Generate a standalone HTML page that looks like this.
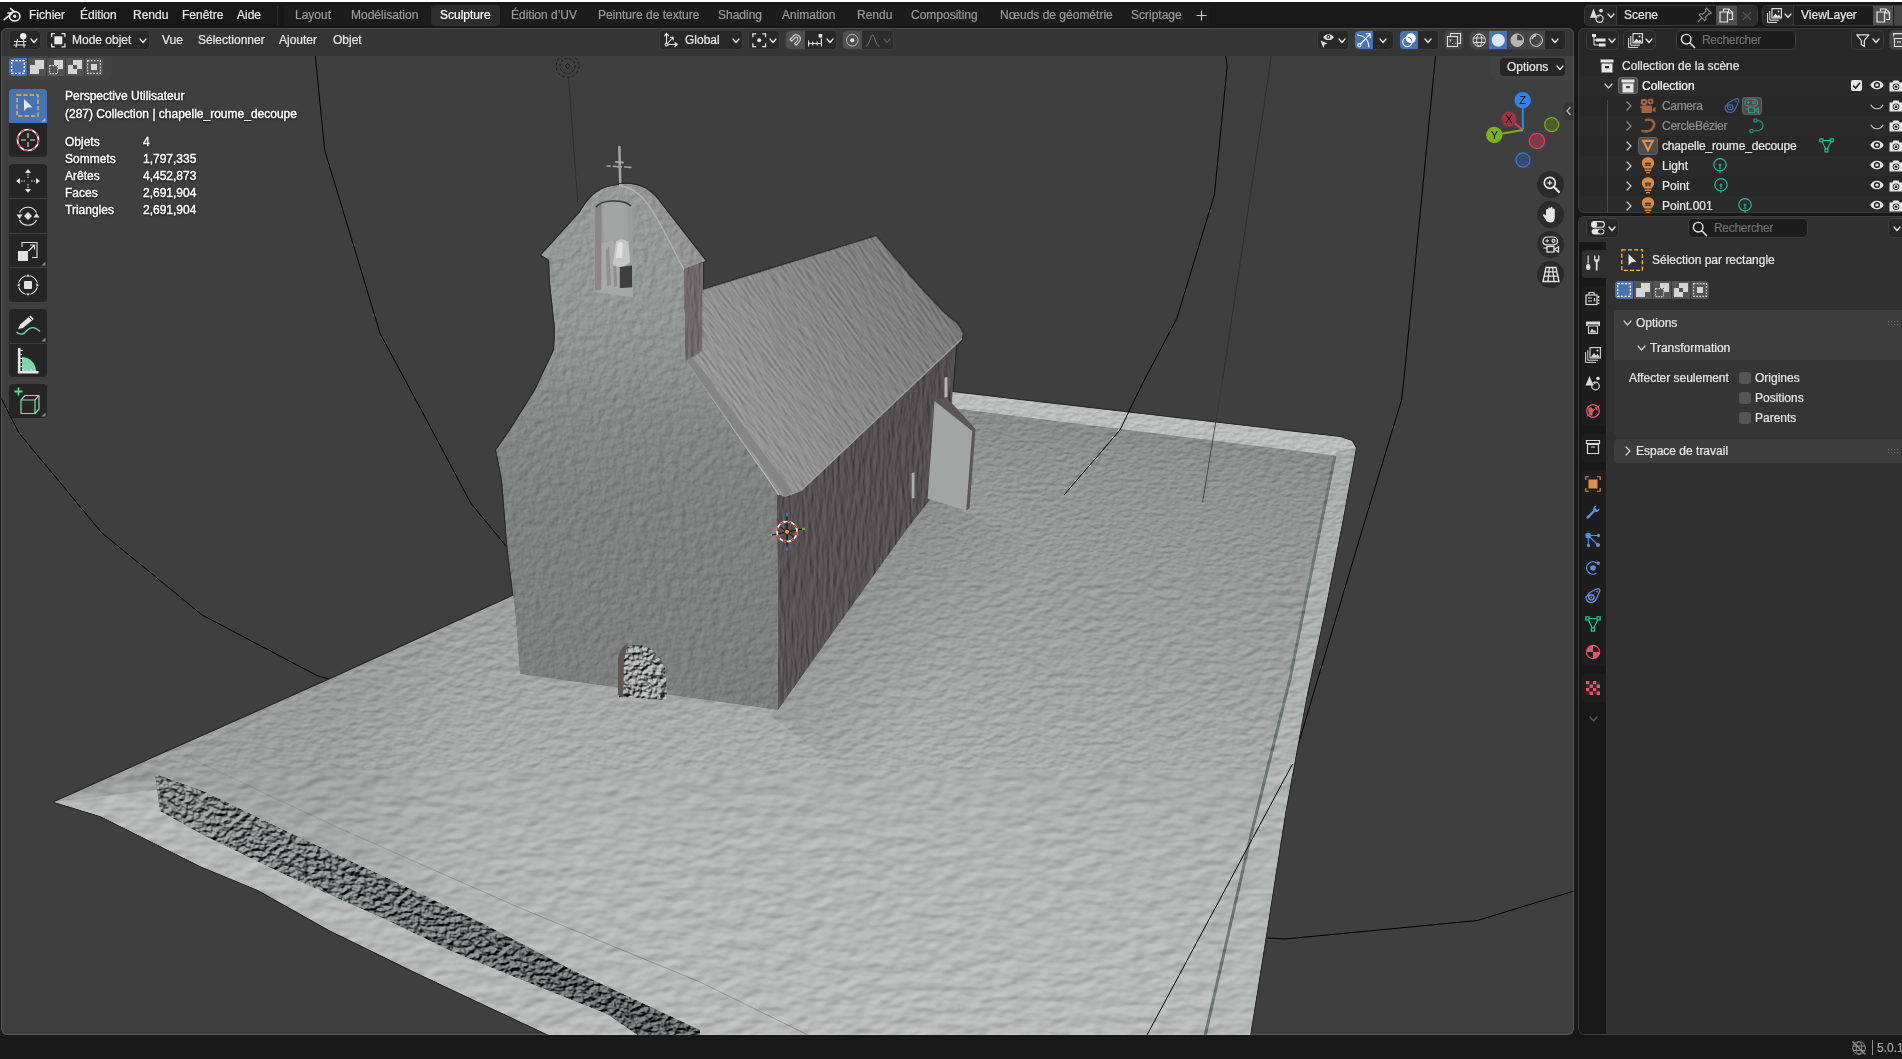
<!DOCTYPE html>
<html lang="fr">
<head>
<meta charset="utf-8">
<title>Blender</title>
<style>
html,body{margin:0;padding:0;background:#181818;}
body{width:1902px;height:1059px;position:relative;overflow:hidden;font-family:"Liberation Sans",sans-serif;font-size:12px;color:#e6e6e6;line-height:14px;}
.a{position:absolute;}
.t{position:absolute;white-space:nowrap;height:14px;line-height:14px;will-change:transform;-webkit-font-smoothing:antialiased;-webkit-text-stroke:0.22px currentColor;}
.dim{color:#989898;}
.sh{text-shadow:0 1px 2px rgba(0,0,0,.9),0 0 2px rgba(0,0,0,.7);color:#fff;-webkit-text-stroke:0.4px #fff;}
svg{position:absolute;overflow:visible;}
#vp{left:1px;top:28px;width:1573px;height:1007px;border-radius:6px;background:#3f3f3f;overflow:hidden;}
.btn{position:absolute;border-radius:4px;box-shadow:0 0 0 1px #3a3a3a;}
.hb{position:absolute;top:31px;height:18px;background:#282828;border-radius:4px;box-shadow:0 0 0 1px #3c3c3c;}
</style>
</head>

<body>
<div class="a" style="left:0;top:0;width:1902px;height:2px;background:#fff"></div>
<div id="topbar" class="a" style="left:0;top:0;width:1902px;height:28px;">
<!-- blender logo -->
<svg style="left:3px;top:7px" width="19" height="16" viewBox="0 0 19 16"><g fill="none" stroke="#e6e6e6" stroke-width="1.7" stroke-linecap="round" stroke-linejoin="round"><path d="M1.2,12.6 L9.2,6.2 M5,6 L9.5,6 M7.6,1.6 L11.2,4.6"/><ellipse cx="11.7" cy="9.3" rx="5.2" ry="4.7"/></g><circle cx="11.7" cy="9.3" r="1.7" fill="#e6e6e6"/></svg>
<span class="t" style="left:29px;top:8px">Fichier</span>
<span class="t" style="left:80px;top:8px">Édition</span>
<span class="t" style="left:133px;top:8px">Rendu</span>
<span class="t" style="left:182px;top:8px">Fenêtre</span>
<span class="t" style="left:237px;top:8px">Aide</span>
<div class="a" style="left:277px;top:6px;width:1px;height:19px;background:#2e2e2e"></div>
<div class="a" style="left:284px;top:5px;width:926px;height:21px;background:#1c1c1c;border-radius:4px"></div>
<div class="a" style="left:431px;top:5px;width:69px;height:21px;background:#2d2d2d;border-radius:4px"></div>
<span class="t dim" style="left:295px;top:8px">Layout</span>
<span class="t dim" style="left:351px;top:8px">Modélisation</span>
<span class="t" style="left:440px;top:8px;color:#fff">Sculpture</span>
<span class="t dim" style="left:511px;top:8px">Édition d’UV</span>
<span class="t dim" style="left:598px;top:8px">Peinture de texture</span>
<span class="t dim" style="left:718px;top:8px">Shading</span>
<span class="t dim" style="left:782px;top:8px">Animation</span>
<span class="t dim" style="left:857px;top:8px">Rendu</span>
<span class="t dim" style="left:911px;top:8px">Compositing</span>
<span class="t dim" style="left:1000px;top:8px">Nœuds de géométrie</span>
<span class="t dim" style="left:1131px;top:8px">Scriptage</span>
<svg style="left:1196px;top:10px" width="11" height="11"><path d="M5.5,0.5V10.5M0.5,5.5H10.5" stroke="#c8c8c8" stroke-width="1.2" fill="none"/></svg>
<!-- scene selector -->
<div class="btn" style="left:1585px;top:6px;width:172px;height:19px;background:#1d1d1d"></div>
<div class="a" style="left:1585px;top:6px;width:31px;height:19px;background:#282828;border-radius:4px 0 0 4px"></div>
<div class="a" style="left:1616px;top:6px;width:1px;height:19px;background:#3a3a3a"></div>
<div class="a" style="left:1716px;top:6px;width:21px;height:19px;background:#505050"></div>
<div class="a" style="left:1737px;top:6px;width:20px;height:19px;background:#2e2e2e;border-radius:0 4px 4px 0"></div>
<svg style="left:1589px;top:8px" width="16" height="16"><path d="M4.5,0.5L8,9.8H1Z" fill="#dcdcdc"/><circle cx="12" cy="2.6" r="1.9" fill="#dcdcdc"/><circle cx="10.5" cy="10.8" r="3.6" fill="none" stroke="#dcdcdc" stroke-width="1.2"/><path d="M8.6,9.6A2.3,2.3 0 0 1 10.4,8.4" stroke="#dcdcdc" fill="none"/></svg>
<svg style="left:1607px;top:13px" width="8" height="6"><path d="M1,1L4,4.2L7,1" fill="none" stroke="#e6e6e6" stroke-width="1.3" stroke-linecap="round"/></svg>
<span class="t" style="left:1624px;top:8px">Scene</span>
<svg style="left:1697px;top:7px" width="16" height="17"><path d="M9.5,1.2L14.2,6L12.8,7.2L11.8,6.6L8.6,10L9,12.6L7.8,13.6L2.2,7.8L3.2,6.8L5.8,7.2L9.2,4L8.4,2.6Z" fill="none" stroke="#8c8c8c" stroke-width="1.1" stroke-linejoin="round"/><path d="M4.8,11L0.8,15.2" stroke="#8c8c8c" stroke-width="1.1"/></svg>
<svg style="left:1719px;top:8px" width="15" height="15"><path d="M4.5,3.5V1H10L13.5,4.5V11.5H10" fill="none" stroke="#e6e6e6" stroke-width="1.2"/><path d="M1,4H8.5V14H1Z" fill="none" stroke="#e6e6e6" stroke-width="1.2"/><path d="M9.5,1V5H13.5" fill="none" stroke="#e6e6e6" stroke-width="1"/></svg>
<svg style="left:1742px;top:11px" width="10" height="10"><path d="M1,1L9,9M9,1L1,9" stroke="#555" stroke-width="1.3"/></svg>
<!-- viewlayer selector -->
<div class="btn" style="left:1763px;top:6px;width:150px;height:19px;background:#1d1d1d"></div>
<div class="a" style="left:1763px;top:6px;width:30px;height:19px;background:#282828;border-radius:4px 0 0 4px"></div>
<div class="a" style="left:1793px;top:6px;width:1px;height:19px;background:#3a3a3a"></div>
<div class="a" style="left:1873px;top:6px;width:20px;height:19px;background:#505050"></div>
<div class="a" style="left:1894px;top:6px;width:20px;height:19px;background:#444"></div>
<svg style="left:1767px;top:8px" width="15" height="15"><path d="M0.6,5V14.4H10M2.8,3V12.2H12" fill="none" stroke="#e6e6e6" stroke-width="1"/><rect x="5" y="0.6" width="9.4" height="9.4" fill="none" stroke="#e6e6e6" stroke-width="1.1"/><path d="M5.5,9.5L8.5,5.5L10.5,8L12,6.5L14,9.5Z" fill="#e6e6e6"/><circle cx="11.5" cy="3.5" r="1" fill="#e6e6e6"/></svg>
<svg style="left:1784px;top:13px" width="8" height="6"><path d="M1,1L4,4.2L7,1" fill="none" stroke="#e6e6e6" stroke-width="1.3" stroke-linecap="round"/></svg>
<span class="t" style="left:1801px;top:8px">ViewLayer</span>
<svg style="left:1876px;top:8px" width="15" height="15"><path d="M4.5,3.5V1H10L13.5,4.5V11.5H10" fill="none" stroke="#e6e6e6" stroke-width="1.2"/><path d="M1,4H8.5V14H1Z" fill="none" stroke="#e6e6e6" stroke-width="1.2"/><path d="M9.5,1V5H13.5" fill="none" stroke="#e6e6e6" stroke-width="1"/></svg>
</div>

<div id="vp" class="a">
<svg id="model" width="1902" height="1059" style="left:-1px;top:-28px">
<defs>
<linearGradient id="gG" gradientUnits="userSpaceOnUse" x1="0" y1="400" x2="0" y2="1036">
<stop offset="0.000" stop-color="#8a8c8b"/><stop offset="0.127" stop-color="#979998"/><stop offset="0.395" stop-color="#a3a5a4"/><stop offset="0.568" stop-color="#abadac"/><stop offset="0.678" stop-color="#b2b4b3"/><stop offset="0.866" stop-color="#b6b8b7"/><stop offset="1.000" stop-color="#b8bab9"/>
</linearGradient>
<linearGradient id="gF" gradientUnits="userSpaceOnUse" x1="0" y1="185" x2="0" y2="710">
<stop offset="0.000" stop-color="#989a99"/><stop offset="0.257" stop-color="#949695"/><stop offset="0.448" stop-color="#868887"/><stop offset="0.619" stop-color="#7f8180"/><stop offset="1.000" stop-color="#7d7f7e"/>
</linearGradient>
<linearGradient id="gR" gradientUnits="userSpaceOnUse" x1="940" y1="290" x2="677" y2="435">
<stop offset="0" stop-color="#7b7a7b"/><stop offset="1" stop-color="#9d9c9d"/>
</linearGradient>
<linearGradient id="gS" gradientUnits="userSpaceOnUse" x1="780" y1="600" x2="950" y2="400">
<stop offset="0" stop-color="#575254"/><stop offset="1" stop-color="#524d4f"/>
</linearGradient>
<filter id="fG1" x="0" y="380" width="1400" height="190" filterUnits="userSpaceOnUse" color-interpolation-filters="sRGB">
<feTurbulence type="fractalNoise" baseFrequency="0.13 0.26" numOctaves="2" seed="4" result="n"/>
<feDiffuseLighting in="n" surfaceScale="1.3" diffuseConstant="1" lighting-color="#fff" result="l"><feDistantLight azimuth="235" elevation="50"/></feDiffuseLighting>
<feComposite in="SourceGraphic" in2="l" operator="arithmetic" k1="0" k2="1" k3="0.26" k4="-0.1992" result="m"/>
<feComposite in="m" in2="SourceGraphic" operator="in"/>
</filter>
<filter id="fG2" x="0" y="570" width="1400" height="200" filterUnits="userSpaceOnUse" color-interpolation-filters="sRGB">
<feTurbulence type="fractalNoise" baseFrequency="0.085 0.16" numOctaves="2" seed="5" result="n"/>
<feDiffuseLighting in="n" surfaceScale="1.6" diffuseConstant="1" lighting-color="#fff" result="l"><feDistantLight azimuth="235" elevation="50"/></feDiffuseLighting>
<feComposite in="SourceGraphic" in2="l" operator="arithmetic" k1="0" k2="1" k3="0.28" k4="-0.2145" result="m"/>
<feComposite in="m" in2="SourceGraphic" operator="in"/>
</filter>
<filter id="fG3" x="0" y="770" width="1400" height="280" filterUnits="userSpaceOnUse" color-interpolation-filters="sRGB">
<feTurbulence type="fractalNoise" baseFrequency="0.05 0.095" numOctaves="2" seed="6" result="n"/>
<feDiffuseLighting in="n" surfaceScale="2.2" diffuseConstant="1" lighting-color="#fff" result="l"><feDistantLight azimuth="235" elevation="50"/></feDiffuseLighting>
<feComposite in="SourceGraphic" in2="l" operator="arithmetic" k1="0" k2="1" k3="0.3" k4="-0.2298" result="m"/>
<feComposite in="m" in2="SourceGraphic" operator="in"/>
</filter>
<filter id="fF" x="480" y="170" width="310" height="560" filterUnits="userSpaceOnUse" color-interpolation-filters="sRGB">
<feTurbulence type="fractalNoise" baseFrequency="0.13" numOctaves="3" seed="9" result="n"/>
<feDiffuseLighting in="n" surfaceScale="1.4" diffuseConstant="1" lighting-color="#fff" result="l"><feDistantLight azimuth="225" elevation="50"/></feDiffuseLighting>
<feComposite in="SourceGraphic" in2="l" operator="arithmetic" k1="0" k2="1" k3="0.26" k4="-0.1992" result="m"/>
<feComposite in="m" in2="SourceGraphic" operator="in"/>
</filter>
<filter id="fS" x="670" y="250" width="320" height="470" filterUnits="userSpaceOnUse" color-interpolation-filters="sRGB">
<feTurbulence type="fractalNoise" baseFrequency="0.28 0.045" numOctaves="3" seed="5" result="n"/>
<feDiffuseLighting in="n" surfaceScale="1.3" diffuseConstant="1" lighting-color="#fff" result="l"><feDistantLight azimuth="200" elevation="50"/></feDiffuseLighting>
<feComposite in="SourceGraphic" in2="l" operator="arithmetic" k1="0" k2="1" k3="0.24" k4="-0.1838" result="m"/>
<feComposite in="m" in2="SourceGraphic" operator="in"/>
</filter>
<filter id="fR" x="-400" y="-400" width="800" height="800" filterUnits="userSpaceOnUse" color-interpolation-filters="sRGB">
<feTurbulence type="fractalNoise" baseFrequency="0.05 0.42" numOctaves="3" seed="7" result="n"/>
<feDiffuseLighting in="n" surfaceScale="1.2" diffuseConstant="1" lighting-color="#fff" result="l"><feDistantLight azimuth="270" elevation="50"/></feDiffuseLighting>
<feComposite in="SourceGraphic" in2="l" operator="arithmetic" k1="0" k2="1" k3="0.24" k4="-0.1838" result="m"/>
<feComposite in="m" in2="SourceGraphic" operator="in"/>
</filter>
<filter id="fW" x="140" y="760" width="580" height="290" filterUnits="userSpaceOnUse" color-interpolation-filters="sRGB">
<feTurbulence type="fractalNoise" baseFrequency="0.16 0.2" numOctaves="2" seed="11" result="n"/>
<feDiffuseLighting in="n" surfaceScale="4" diffuseConstant="1" lighting-color="#fff" result="l"><feDistantLight azimuth="240" elevation="50"/></feDiffuseLighting>
<feComposite in="SourceGraphic" in2="l" operator="arithmetic" k1="0" k2="1" k3="0.7" k4="-0.536" result="m"/>
<feComposite in="m" in2="SourceGraphic" operator="in"/>
</filter>
<linearGradient id="gW" gradientUnits="userSpaceOnUse" x1="160" y1="790" x2="640" y2="1020">
<stop offset="0" stop-color="#868b8a"/><stop offset="0.5" stop-color="#747a79"/><stop offset="1" stop-color="#5f6665"/>
</linearGradient>
<linearGradient id="gRW" gradientUnits="userSpaceOnUse" x1="1340" y1="450" x2="1230" y2="1036"><stop offset="0" stop-color="#a9abaa"/><stop offset="0.4" stop-color="#afb1b0"/><stop offset="1" stop-color="#b7b9b8"/></linearGradient>
<linearGradient id="gX" gradientUnits="userSpaceOnUse" x1="54" y1="0" x2="1356" y2="0"><stop offset="0" stop-color="#000" stop-opacity="0.08"/><stop offset="0.21" stop-color="#000" stop-opacity="0.075"/><stop offset="0.31" stop-color="#000" stop-opacity="0.015"/><stop offset="0.42" stop-color="#000" stop-opacity="0"/><stop offset="1" stop-color="#000" stop-opacity="0"/></linearGradient>
<radialGradient id="gY" gradientUnits="userSpaceOnUse" cx="1350" cy="440" r="540"><stop offset="0" stop-color="#000" stop-opacity="0.065"/><stop offset="0.45" stop-color="#000" stop-opacity="0.033"/><stop offset="1" stop-color="#000" stop-opacity="0"/></radialGradient>
<filter id="fD" x="610" y="630" width="70" height="80" filterUnits="userSpaceOnUse" color-interpolation-filters="sRGB">
<feTurbulence type="fractalNoise" baseFrequency="0.22" numOctaves="2" seed="3" result="n"/>
<feDiffuseLighting in="n" surfaceScale="4" diffuseConstant="1" lighting-color="#fff" result="l"><feDistantLight azimuth="235" elevation="50"/></feDiffuseLighting>
<feComposite in="SourceGraphic" in2="l" operator="arithmetic" k1="0" k2="1" k3="0.75" k4="-0.5745" result="m"/>
<feComposite in="m" in2="SourceGraphic" operator="in"/>
</filter>
<linearGradient id="gAO" gradientUnits="userSpaceOnUse" x1="854" y1="605" x2="951" y2="675"><stop offset="0" stop-color="#000" stop-opacity="0.075"/><stop offset="1" stop-color="#000" stop-opacity="0"/></linearGradient>
</defs>

<g fill="none" stroke="#000" stroke-width="1" id="curves">
<path d="M315.3,56 L324.7,150.2 L380.2,333.6 L422.3,412 L470.7,503 L508,548.5"/>
<path d="M0,396 L19,433 L101.6,532.6 L201.8,614.8 L316.6,675.4 L333,680.4"/>
<path d="M1435.5,56 L1404,379 L1401.5,400 L1362.5,529 L1292.5,764 L1146.5,1036"/>
<path d="M1267.5,938 L1285,939 L1477.5,920.5 L1574,891"/>
<path d="M1225.7,56 L1227.2,66.7 L1214.4,194.8 L1176.9,318.3 L1144.9,379 L1132,405" />
<path d="M1271.4,56 L1222.6,379" stroke="#2a2a2a" stroke-width="0.8"/>
<path d="M568.6,78 L578,206" stroke="#2a2a2a" stroke-width="0.8"/>
</g>
<g fill="none" stroke="#1c1c1c" stroke-width="1" id="lighticon">
<circle cx="567.6" cy="66" r="11.5" stroke-dasharray="3 2.2"/><circle cx="567.6" cy="66" r="7.5" stroke-dasharray="2.6 2"/><path d="M567.6,63.5L570.1,66L567.6,68.5L565.1,66Z"/>
</g>
<g id="outline" fill="none" stroke="#2b2b2b" stroke-width="2.2" stroke-linejoin="round"><path d="M54,802 L150,759 L330,679 L512,596 L600,560 L952,392 L1340,437 L1352,441 L1356,448 L1341,529 L1325,610 L1307,694 L1285,814 L1267,929 L1250,1036 L551,1036 L470,998 L417,973 L329,930 L258,890 L200,866 L100,816 Z"/><path d="M619,185 C600,186 590,195 580,212 L541,255 L549,260 L550,283 L555,330 L554,350 L535,390 L510,430 L496,450 L502,480 L507,545 L515,610 L520,674 L778,710 L777,493 L686,361 L684,269 C660,225 648,188 619,185 Z"/><path d="M619,184 C640,182 652,190 660,202 L706,261 L684,269 C660,235 650,190 619,188 Z"/><path d="M702,290 L876,236 L900,264 L916,283 L944,313 L957,323 L963,333 L962,339 L801,491 L785,497 L777,493 L686,361 L702,350 Z"/><path d="M777,493 L785,497 L801,491 L962,339 L956,348 L952,403 L935,400 L930,500 L907,529 L824,645 L778,710 Z"/><path d="M683,268 L703,262 L703,350 L686,362 Z"/><path d="M934.6,401 L972.3,431 L975.5,429 L969.5,508.5 L966.3,510.5 L927.6,498.6 Z"/></g>
<g filter="url(#fG1)">
<!-- ground -->
<path id="ground" fill="url(#gG)" d="M54,802 L150,759 L330,679 L512,596 L600,560 L952,392 L1340,437 L1352,441 L1356,448 L1341,529 L1325,610 L1307,694 L1285,814 L1267,929 L1250,1036 L551,1036 L470,998 L417,973 L329,930 L258,890 L200,866 L100,816 Z"/>
<path fill="url(#gX)" d="M54,802 L150,759 L330,679 L512,596 L600,560 L952,392 L1340,437 L1352,441 L1356,448 L1341,529 L1325,610 L1307,694 L1285,814 L1267,929 L1250,1036 L551,1036 L470,998 L417,973 L329,930 L258,890 L200,866 L100,816 Z"/>
<path fill="url(#gY)" d="M54,802 L150,759 L330,679 L512,596 L600,560 L952,392 L1340,437 L1352,441 L1356,448 L1341,529 L1325,610 L1307,694 L1285,814 L1267,929 L1250,1036 L551,1036 L470,998 L417,973 L329,930 L258,890 L200,866 L100,816 Z"/>
<!-- back wall -->
<path fill="#bbbdbc" d="M952,392 L1340,437 L1352,441 L1356,448 L1338,456 L1330,455 L952,408 Z"/>
<!-- right wall -->
<path fill="url(#gRW)" d="M1356,448 L1341,529 L1325,610 L1307,694 L1285,814 L1267,929 L1250,1036 L1205,1036 L1250,839 L1290,679 L1320,529 L1336,452 Z"/>
<path fill="none" stroke="#6f7574" stroke-width="3" d="M1335,456 L1320,529 L1290,679 L1250,839 L1205,1036"/>
<!-- front skirt + stone wall -->
<path fill="#b6b8b7" d="M54,802 L155,790 L640,1036 L551,1036 L470,998 L417,973 L329,930 L258,890 L200,866 L100,816 Z"/>
<path d="M192,759 L332,825 L520,908 L700,982 L810,1036" fill="none" stroke="#8f9392" stroke-width="1"/>
</g>
<g filter="url(#fG2)">
<!-- ground -->
<path fill="url(#gG)" d="M54,802 L150,759 L330,679 L512,596 L600,560 L952,392 L1340,437 L1352,441 L1356,448 L1341,529 L1325,610 L1307,694 L1285,814 L1267,929 L1250,1036 L551,1036 L470,998 L417,973 L329,930 L258,890 L200,866 L100,816 Z"/>
<path fill="url(#gX)" d="M54,802 L150,759 L330,679 L512,596 L600,560 L952,392 L1340,437 L1352,441 L1356,448 L1341,529 L1325,610 L1307,694 L1285,814 L1267,929 L1250,1036 L551,1036 L470,998 L417,973 L329,930 L258,890 L200,866 L100,816 Z"/>
<path fill="url(#gY)" d="M54,802 L150,759 L330,679 L512,596 L600,560 L952,392 L1340,437 L1352,441 L1356,448 L1341,529 L1325,610 L1307,694 L1285,814 L1267,929 L1250,1036 L551,1036 L470,998 L417,973 L329,930 L258,890 L200,866 L100,816 Z"/>
<!-- back wall -->
<path fill="#bbbdbc" d="M952,392 L1340,437 L1352,441 L1356,448 L1338,456 L1330,455 L952,408 Z"/>
<!-- right wall -->
<path fill="url(#gRW)" d="M1356,448 L1341,529 L1325,610 L1307,694 L1285,814 L1267,929 L1250,1036 L1205,1036 L1250,839 L1290,679 L1320,529 L1336,452 Z"/>
<path fill="none" stroke="#6f7574" stroke-width="3" d="M1335,456 L1320,529 L1290,679 L1250,839 L1205,1036"/>
<!-- front skirt + stone wall -->
<path fill="#b6b8b7" d="M54,802 L155,790 L640,1036 L551,1036 L470,998 L417,973 L329,930 L258,890 L200,866 L100,816 Z"/>
<path d="M192,759 L332,825 L520,908 L700,982 L810,1036" fill="none" stroke="#8f9392" stroke-width="1"/>
</g>
<g filter="url(#fG3)">
<!-- ground -->
<path fill="url(#gG)" d="M54,802 L150,759 L330,679 L512,596 L600,560 L952,392 L1340,437 L1352,441 L1356,448 L1341,529 L1325,610 L1307,694 L1285,814 L1267,929 L1250,1036 L551,1036 L470,998 L417,973 L329,930 L258,890 L200,866 L100,816 Z"/>
<path fill="url(#gX)" d="M54,802 L150,759 L330,679 L512,596 L600,560 L952,392 L1340,437 L1352,441 L1356,448 L1341,529 L1325,610 L1307,694 L1285,814 L1267,929 L1250,1036 L551,1036 L470,998 L417,973 L329,930 L258,890 L200,866 L100,816 Z"/>
<path fill="url(#gY)" d="M54,802 L150,759 L330,679 L512,596 L600,560 L952,392 L1340,437 L1352,441 L1356,448 L1341,529 L1325,610 L1307,694 L1285,814 L1267,929 L1250,1036 L551,1036 L470,998 L417,973 L329,930 L258,890 L200,866 L100,816 Z"/>
<!-- back wall -->
<path fill="#bbbdbc" d="M952,392 L1340,437 L1352,441 L1356,448 L1338,456 L1330,455 L952,408 Z"/>
<!-- right wall -->
<path fill="url(#gRW)" d="M1356,448 L1341,529 L1325,610 L1307,694 L1285,814 L1267,929 L1250,1036 L1205,1036 L1250,839 L1290,679 L1320,529 L1336,452 Z"/>
<path fill="none" stroke="#6f7574" stroke-width="3" d="M1335,456 L1320,529 L1290,679 L1250,839 L1205,1036"/>
<!-- front skirt + stone wall -->
<path fill="#b6b8b7" d="M54,802 L155,790 L640,1036 L551,1036 L470,998 L417,973 L329,930 L258,890 L200,866 L100,816 Z"/>
<path d="M192,759 L332,825 L520,908 L700,982 L810,1036" fill="none" stroke="#8f9392" stroke-width="1"/>
</g>
<g filter="url(#fW)"><path fill="url(#gW)" d="M155,774 L205,792 L290,833 L385,877 L480,922 L576,972 L700,1030 L700,1036 L639,1036 L607,1014 L512,976 L449,950 L385,919 L290,877 L205,836 L160,811 Z"/></g>
<path fill="url(#gAO)" d="M770,715 L930,495 L1060,560 L880,800 Z"/>
<g filter="url(#fS)">
<!-- side wall -->
<path fill="url(#gS)" d="M777,493 L785,497 L801,491 L962,339 L956,348 L952,403 L935,400 L930,500 L907,529 L824,645 L778,710 Z"/>
<!-- tower side -->
<path fill="#6d696b" d="M683,268 L703,262 L703,350 L686,362 Z"/>
</g>
<!-- buttress -->
<path fill="#a3a4a4" d="M934.6,401 L972.3,431 L966.3,510.5 L927.6,498.6 Z"/>
<path fill="#5a5557" d="M936.5,398 L949,400 L975.5,429 L972.3,431 L934.6,401 Z"/>
<path fill="#5a5557" d="M972.3,431 L975.5,429 L969.5,508.5 L966.3,510.5 Z"/>
<path fill="#b5b5b5" d="M944.5,377.5 L947.5,377 L947.5,397 L944.5,397.4 Z"/>
<path fill="#adadad" d="M911.7,473 L914.5,472.5 L914.5,498 L911.7,498.6 Z"/>
<!-- roof -->
<g transform="translate(820,360) rotate(54)" filter="url(#fR)">
<path transform="rotate(-54) translate(-820,-360)" fill="url(#gR)" d="M702,290 L876,236 L900,264 L916,283 L944,313 L957,323 L963,333 L962,339 L801,491 L785,497 L777,493 L686,361 L702,350 Z"/>
</g>
<path d="M686.4,362 L693,358 L792,491 L785,496.5 Z" fill="#858585"/>
<path d="M686,362 L779,495" stroke="#b4b5b5" stroke-width="1.6" fill="none"/>
<path d="M801,490.5 L962,338.5" stroke="#9e9e9e" stroke-width="1.4" fill="none"/>
<g filter="url(#fF)">
<!-- tower cap -->
<path fill="#949494" d="M619,184 C640,182 652,190 660,202 L706,261 L684,269 C660,235 650,190 619,188 Z"/>
<!-- facade -->
<path fill="url(#gF)" d="M619,185 C600,186 590,195 580,212 L541,255 L549,260 L550,283 L555,330 L554,350 L535,390 L510,430 L496,450 L502,480 L507,545 L515,610 L520,674 L778,710 L777,493 L686,361 L684,269 C660,225 648,188 619,185 Z"/>
</g>
<path d="M619,185.5 C648,188.5 660,225.5 684,269.5" fill="none" stroke="#b2b4b3" stroke-width="1.3"/>
<!-- bell opening -->
<path fill="#9b9d9c" d="M593.6,212 C595,199 630,198 633,212 L633.2,297.5 L594.5,292 Z"/>
<path fill="#3f3f3f" d="M619.6,267 L632,265.5 L632.2,287.4 L619.8,288 Z"/>
<!-- door -->
<path filter="url(#fD)" fill="#9c9e9d" d="M619,697 L618,660 C622,640 655,636 666,672 L667,700 Z"/>
<path fill="#5d5758" d="M618,695 L618,660 C619,650 624,645 628,643 L624,660 L623,697 Z"/>

<!-- lines in front of ground -->
<g fill="none" stroke="#000" stroke-width="1">
<path d="M1132,405 L1120,430 L1064,495"/>
<path d="M1292.5,764 L1146.5,1036"/>
<path d="M1227.5,350 L1202.5,502.5" stroke="#333" stroke-width="0.8"/>
</g>
<!-- cross -->
<g fill="none" stroke="#a3a3a3" stroke-linecap="round">
<path d="M619.4,147 L620.2,182" stroke-width="2.6"/><path d="M607,166 L633,167.5" stroke-width="1.6" stroke-dasharray="3 3.4 8 3.4 3 0"/><path d="M616,162 L623,162.5" stroke-width="2"/>
</g>
<!-- bell -->
<path fill="#8a8687" d="M594.7,210 C596,204 599,202.5 601.5,202.5 L601.5,289.7 L595,290 Z"/>
<path d="M596,207 C602,199.5 624,199 631,206" fill="none" stroke="#3a3a3a" stroke-width="1.6"/>
<path fill="#a2a4a3" d="M601.5,204 C610,201 622,201.5 627.6,206 L628,240 L604,241 Z"/>
<path fill="#a9a9a9" d="M601.5,243 L614,240.5 L617,258 L619.6,268 L619.6,289.7 L601.5,289.7 Z"/>
<path fill="#8f8f8f" d="M606,250 L609,246 L611,285 L607,286 Z M613,262 L616,262 L617,286 L614,287 Z"/>
<path fill="#c6c6c6" d="M616,241 C620,238.5 626,239 628.5,242 L630,262 C626,267 617,268 612.8,265 Z"/>
<path fill="#e0e0e0" d="M617.5,243 C619,241.5 622,241.5 623,243 L622,258 L616,258 Z"/>
<path fill="#a6a8a7" d="M594.5,292 L601.5,289.2 L633,287.4 L633.2,297.5 Z"/>
<!-- 3D cursor -->
<g fill="none">
<path d="M787,517 L787,546 M772,535 L802,529" stroke="#111" stroke-width="1.1"/>
<path d="M779,526 L795,538" stroke="#111" stroke-width="1"/>
<circle cx="787" cy="531.5" r="10" stroke="#fff" stroke-width="1.6"/>
<circle cx="787" cy="531.5" r="10" stroke="#ee2a2a" stroke-width="1.6" stroke-dasharray="3.93 3.93"/>
<circle cx="787" cy="531.7" r="2.6" fill="#f5a02a" stroke="#121a2a" stroke-width="1"/>
<path d="M787,513 V516 M787,548 V550.5" stroke="#3d78d8" stroke-width="2"/>
<path d="M769,535.4 L772,534.8 M802,529.2 L805,528.6" stroke="#6fb32a" stroke-width="2"/>
</g>
</svg>

</div>
<div class="a" style="left:1px;top:28px;width:1573px;height:28px;background:#353535;border-radius:6px 6px 0 0"></div>
<div class="a" style="left:1px;top:56px;width:111px;height:24px;background:#424242;border-radius:0 0 6px 0"></div>
<div class="a" style="left:1491px;top:56px;width:83px;height:24px;background:#424242;border-radius:0 0 0 6px"></div>
<div class="hb" style="left:10px;width:30px"></div>
<svg style="left:13px;top:32px" width="18" height="16"><g fill="none" stroke="#e6e6e6" stroke-width="1.1"><path d="M1,9.5H13.5M0.5,13H13M4.5,7 L3,15.5M10.5,7 L11,15.5"/></g><circle cx="10.2" cy="4.2" r="3.2" fill="#e6e6e6"/><circle cx="9.2" cy="3.2" r="1.1" fill="#fff"/></svg>
<svg style="left:30.0px;top:38.25px" width="8" height="5.5"><path d="M1,1 L4.0,4.5 L7,1" fill="none" stroke="#e6e6e6" stroke-width="1.3" stroke-linecap="round" stroke-linejoin="round"/></svg>
<div class="hb" style="left:47px;width:102px"></div>
<svg style="left:51px;top:33px" width="15" height="15"><g fill="none" stroke="#e6e6e6" stroke-width="1.2"><path d="M0.6,4V0.6H4M10.5,0.6H13.9V4M13.9,10.5V13.9H10.5M4,13.9H0.6V10.5"/></g><rect x="3.3" y="3.3" width="8" height="8" fill="#e6e6e6"/></svg>
<span class="t" style="left:72px;top:33px">Mode objet</span>
<svg style="left:139.0px;top:38.25px" width="8" height="5.5"><path d="M1,1 L4.0,4.5 L7,1" fill="none" stroke="#e6e6e6" stroke-width="1.3" stroke-linecap="round" stroke-linejoin="round"/></svg>
<span class="t" style="left:162px;top:33px">Vue</span>
<span class="t" style="left:198px;top:33px">Sélectionner</span>
<span class="t" style="left:279px;top:33px">Ajouter</span>
<span class="t" style="left:333px;top:33px">Objet</span>
<div class="hb" style="left:660px;width:82px"></div>
<svg style="left:663px;top:32px" width="16" height="16"><g fill="none" stroke="#e6e6e6" stroke-width="1.1" stroke-linecap="round" stroke-linejoin="round"><path d="M3.5,12.5V1.5M1.5,3.8L3.5,1.3L5.5,3.8M3.5,12.5H14M11.8,10.5L14.3,12.5L11.8,14.5M4.5,11.5L10,5.5M7.5,5.3H10.2V8"/><circle cx="3.5" cy="12.5" r="1.4" fill="#282828"/></g></svg>
<span class="t" style="left:685px;top:33px">Global</span>
<svg style="left:732.0px;top:38.25px" width="8" height="5.5"><path d="M1,1 L4.0,4.5 L7,1" fill="none" stroke="#e6e6e6" stroke-width="1.3" stroke-linecap="round" stroke-linejoin="round"/></svg>
<div class="hb" style="left:749px;width:30px"></div>
<svg style="left:752px;top:33px" width="16" height="15"><g fill="none" stroke="#e6e6e6" stroke-width="1.2"><path d="M0.8,4.2V0.8H4.2M10.2,0.8H13.6V4.2M13.6,10.2V13.6H10.2M4.2,13.6H0.8V10.2"/></g><circle cx="7.2" cy="7.2" r="2" fill="#e6e6e6"/></svg>
<svg style="left:769.0px;top:38.25px" width="8" height="5.5"><path d="M1,1 L4.0,4.5 L7,1" fill="none" stroke="#e6e6e6" stroke-width="1.3" stroke-linecap="round" stroke-linejoin="round"/></svg>
<div class="hb" style="left:786px;width:50px"></div>
<div class="a" style="left:786px;top:31px;width:19px;height:18px;background:#4f4f4f;border-radius:4px 0 0 4px"></div>
<svg style="left:788px;top:33px" width="15" height="15"><path d="M2,6.5 L5.5,2.8 C9,-0.5 15,4.5 11,9 L8.5,12.2 L6.6,10.6 L9.2,7.6 C11,5.2 8.6,3.2 6.8,5 L3.8,8.2 Z" fill="none" stroke="#cfcfcf" stroke-width="1.2" stroke-linejoin="round"/></svg>
<svg style="left:808px;top:34px" width="16" height="14"><g fill="none" stroke="#e6e6e6" stroke-width="1.1"><path d="M0.6,6.5V12.5M0.6,9.5H13.4M13.4,4.5V12.5M4.8,7.5V11.5M9.2,7.5V11.5"/></g><rect x="10.6" y="0" width="3.6" height="3.6" fill="#e6e6e6"/></svg>
<svg style="left:826.0px;top:38.25px" width="8" height="5.5"><path d="M1,1 L4.0,4.5 L7,1" fill="none" stroke="#e6e6e6" stroke-width="1.3" stroke-linecap="round" stroke-linejoin="round"/></svg>
<div class="hb" style="left:843px;width:50px;background:#2c2c2c"></div>
<div class="a" style="left:843px;top:31px;width:19px;height:18px;background:#4f4f4f;border-radius:4px 0 0 4px"></div>
<svg style="left:845px;top:33px" width="15" height="15"><circle cx="7.3" cy="7.2" r="5.8" fill="none" stroke="#bdbdbd" stroke-width="1"/><circle cx="7.3" cy="7.2" r="2" fill="#e6e6e6"/></svg>
<svg style="left:865px;top:34px" width="16" height="13"><path d="M0.5,12 C5,12 5,1 7.5,1 C10,1 10,12 14.5,12" fill="none" stroke="#6a6a6a" stroke-width="1.1"/></svg>
<svg style="left:883.0px;top:38.25px" width="8" height="5.5"><path d="M1,1 L4.0,4.5 L7,1" fill="none" stroke="#5a5a5a" stroke-width="1.3" stroke-linecap="round" stroke-linejoin="round"/></svg>
<div class="hb" style="left:1318px;width:30px"></div>
<svg style="left:1320px;top:32px" width="16" height="17"><path d="M3.2,5.2 C5.5,1.2 11.5,1.2 13.8,5.2 C11.5,9 5.5,9 3.2,5.2Z" fill="#e6e6e6"/><circle cx="8.5" cy="5" r="2" fill="#282828"/><circle cx="8.5" cy="5" r="0.9" fill="#e6e6e6"/><path d="M0.5,8.5 L7.5,11.5 L4.5,12.6 L3.4,16 Z" fill="#e6e6e6"/></svg>
<svg style="left:1338.0px;top:38.25px" width="8" height="5.5"><path d="M1,1 L4.0,4.5 L7,1" fill="none" stroke="#e6e6e6" stroke-width="1.3" stroke-linecap="round" stroke-linejoin="round"/></svg>
<div class="hb" style="left:1355px;width:38px"></div>
<div class="a" style="left:1355px;top:31px;width:18px;height:18px;background:#4772b3;border-radius:4px 0 0 4px"></div>
<svg style="left:1356px;top:32px" width="16" height="16"><g fill="none" stroke="#fff" stroke-width="1.1" stroke-linecap="round"><path d="M1.5,3 C8,3.5 12.5,8 13,15M4.5,12L14,2M10.2,1.8H14.2V5.8"/><circle cx="3.3" cy="13.2" r="1.6"/></g></svg>
<svg style="left:1379.0px;top:38.25px" width="8" height="5.5"><path d="M1,1 L4.0,4.5 L7,1" fill="none" stroke="#e6e6e6" stroke-width="1.3" stroke-linecap="round" stroke-linejoin="round"/></svg>
<div class="hb" style="left:1400px;width:38px"></div>
<div class="a" style="left:1400px;top:31px;width:18px;height:18px;background:#4772b3;border-radius:4px 0 0 4px"></div>
<svg style="left:1401px;top:32px" width="16" height="16"><circle cx="9.8" cy="6.3" r="5" fill="#fff"/><circle cx="6.3" cy="10" r="4.6" fill="none" stroke="#fff" stroke-width="1.1"/><path d="M6.8,5.2A4.6,4.6 0 0 1 10.8,9.2" fill="none" stroke="#4772b3" stroke-width="1.1"/></svg>
<svg style="left:1424.0px;top:38.25px" width="8" height="5.5"><path d="M1,1 L4.0,4.5 L7,1" fill="none" stroke="#e6e6e6" stroke-width="1.3" stroke-linecap="round" stroke-linejoin="round"/></svg>
<div class="hb" style="left:1445px;width:18px;background:#464646"></div>
<svg style="left:1446px;top:32px" width="16" height="16"><g fill="none" stroke="#e0e0e0" stroke-width="1.1"><path d="M4.5,4.5V1.5H14.5V11.5H11.5"/><rect x="1.5" y="4.5" width="10" height="10"/></g><path d="M4.3,7V9.5M6,11.5h1.3M9,11.5h0.6" stroke="#e0e0e0" stroke-width="1"/></svg>
<div class="hb" style="left:1470px;width:95px"></div>
<div class="a" style="left:1470px;top:31px;width:75px;height:18px;background:#464646;border-radius:4px 0 0 4px"></div>
<div class="a" style="left:1489px;top:31px;width:18px;height:18px;background:#4772b3"></div>
<div class="a" style="left:1507px;top:31px;width:1px;height:18px;background:#3a3a3a"></div><div class="a" style="left:1526px;top:31px;width:1px;height:18px;background:#3a3a3a"></div>
<svg style="left:1472px;top:33px" width="15" height="15"><g fill="none" stroke="#dcdcdc" stroke-width="1"><circle cx="7.2" cy="7.2" r="6.2"/><ellipse cx="7.2" cy="7.2" rx="2.6" ry="6.2"/><path d="M1.5,5H12.9M1.5,9.5H12.9"/></g></svg>
<svg style="left:1491px;top:33px" width="15" height="15"><circle cx="7.2" cy="7.2" r="6.5" fill="#dfe6f3"/></svg>
<svg style="left:1510px;top:33px" width="15" height="15"><circle cx="7.2" cy="7.2" r="6.2" fill="none" stroke="#dcdcdc" stroke-width="1"/><path d="M7.2,1V7.2H13.4A6.2,6.2 0 1 1 7.2,1Z" fill="#b5b5b5"/></svg>
<svg style="left:1529px;top:33px" width="15" height="15"><circle cx="7.2" cy="7.2" r="6.2" fill="none" stroke="#dcdcdc" stroke-width="1"/><path d="M3,6A4.5,4.5 0 0 1 7,2.6" fill="none" stroke="#dcdcdc" stroke-width="1.2"/><path d="M11.8,8.5A5,5 0 0 1 7.8,12.2" fill="none" stroke="#9a9a9a" stroke-width="1.6" stroke-dasharray="1 1"/></svg>
<svg style="left:1551.0px;top:38.25px" width="8" height="5.5"><path d="M1,1 L4.0,4.5 L7,1" fill="none" stroke="#e6e6e6" stroke-width="1.3" stroke-linecap="round" stroke-linejoin="round"/></svg>
<div class="a" style="left:1500px;top:58px;width:65px;height:18px;background:#262626;border-radius:4px;"></div>
<span class="t" style="left:1507px;top:60px">Options</span>
<svg style="left:1556.0px;top:64.75px" width="8" height="5.5"><path d="M1,1 L4.0,4.5 L7,1" fill="none" stroke="#e6e6e6" stroke-width="1.3" stroke-linecap="round" stroke-linejoin="round"/></svg>
<div class="a" style="left:9px;top:58px;width:94px;height:18px;background:#545454;border-radius:4px;"></div><div class="a" style="left:9px;top:58px;width:18px;height:18px;background:#4772b3;border-radius:4px 0 0 4px;"></div><div class="a" style="left:27px;top:58px;width:1px;height:18px;background:#3a3a3a;border-radius:0;"></div><div class="a" style="left:46px;top:58px;width:1px;height:18px;background:#3a3a3a;border-radius:0;"></div><div class="a" style="left:65px;top:58px;width:1px;height:18px;background:#3a3a3a;border-radius:0;"></div><div class="a" style="left:84px;top:58px;width:1px;height:18px;background:#3a3a3a;border-radius:0;"></div><svg style="left:11px;top:60px" width="14" height="14"><rect x="0.7" y="0.7" width="12.6" height="12.6" fill="none" stroke="#fff" stroke-width="1.3" stroke-dasharray="2.2 1.4"/></svg><svg style="left:30px;top:60px" width="14" height="14"><path d="M5,0H14V9H9V14H0V5H5Z" fill="#d4d4d4"/></svg><svg style="left:49px;top:60px" width="14" height="14"><path d="M5,0H14V9H9V5H5Z" fill="#d4d4d4"/><rect x="0.6" y="5.6" width="8" height="8" fill="none" stroke="#d4d4d4" stroke-width="1.1" stroke-dasharray="1.6 1.2"/></svg><svg style="left:68px;top:60px" width="14" height="14"><path d="M5,0H14V9H9V14H0V5H5Z" fill="#d4d4d4"/><rect x="5" y="5" width="4" height="4" fill="#545454"/></svg><svg style="left:87px;top:60px" width="14" height="14"><rect x="0.6" y="0.6" width="12.8" height="12.8" fill="none" stroke="#d4d4d4" stroke-width="1.1" stroke-dasharray="1.8 1.3"/><rect x="4" y="4" width="6" height="6" fill="#d4d4d4"/></svg>
<div class="a" style="left:9px;top:89px;width:38px;height:34px;background:#4772b3;border-radius:4px 4px 0 0;"></div>
<div class="a" style="left:9px;top:123px;width:38px;height:34px;background:#252525;border-radius:0 0 4px 4px;"></div>
<div class="a" style="left:9px;top:164px;width:38px;height:34px;background:#252525;border-radius:4px 4px 0 0;"></div>
<div class="a" style="left:9px;top:199px;width:38px;height:34px;background:#252525;border-radius:0;"></div>
<div class="a" style="left:9px;top:234px;width:38px;height:33px;background:#252525;border-radius:0;"></div>
<div class="a" style="left:9px;top:268px;width:38px;height:34px;background:#252525;border-radius:0 0 4px 4px;"></div>
<div class="a" style="left:9px;top:309px;width:38px;height:34px;background:#252525;border-radius:4px 4px 0 0;"></div>
<div class="a" style="left:9px;top:344px;width:38px;height:33px;background:#252525;border-radius:0 0 4px 4px;"></div>
<div class="a" style="left:9px;top:384px;width:38px;height:34px;background:#252525;border-radius:4px;"></div>
<svg style="left:16px;top:94px" width="24" height="24"><rect x="1" y="1" width="21" height="21" fill="none" stroke="#f5b63d" stroke-width="1.4" stroke-dasharray="4.2 2.2"/><path d="M8,5 L8,17 L11.3,13.6 L16.5,13.2 Z" fill="#e8e8e8"/></svg>
<svg style="left:41px;top:117px" width="5" height="5"><path d="M4.5,0.5V4.5H0.5Z" fill="#9fb6dd"/></svg>
<svg style="left:15px;top:128px" width="26" height="26"><circle cx="13" cy="12" r="10.5" fill="none" stroke="#eee" stroke-width="1.6"/><circle cx="13" cy="12" r="10.5" fill="none" stroke="#e0454f" stroke-width="1.6" stroke-dasharray="4.1 4.15"/><path d="M13,5V10M13,14V19M6,12H11M15,12H20" stroke="#ddd" stroke-width="1.1"/></svg>
<svg style="left:16px;top:169px" width="24" height="24"><g fill="#e0e0e0"><path d="M12,0 L15,4 H9Z M12,24 L15,20 H9Z M0,12 L4,9 V15Z M24,12 L20,9 V15Z"/></g><path d="M12,5V9M12,15V19M5,12H9M15,12H19" stroke="#e0e0e0" stroke-width="1.1" stroke-dasharray="1.6 1.2"/></svg>
<svg style="left:16px;top:204px" width="24" height="24"><g fill="none" stroke="#e0e0e0" stroke-width="1.2"><path d="M3.5,8.5A9.5,9.5 0 0 1 20.5,8.5M20.5,16A9.5,9.5 0 0 1 3.5,16"/></g><path d="M12,8 L16,12 L12,16 L8,12Z" fill="#e0e0e0"/><path d="M0.5,10.5H6.5L3.5,15Z M17.5,13.5H23.5L20.5,9Z" fill="#e0e0e0"/></svg>
<svg style="left:18px;top:241px" width="21" height="21"><rect x="0" y="10" width="10" height="10" fill="#e0e0e0"/><path d="M4,6V1.5H19V16.5H14" fill="none" stroke="#e0e0e0" stroke-width="1.1"/><path d="M10.5,10 L16,4.5M12,4H16.5V8.5" fill="none" stroke="#e0e0e0" stroke-width="1.2"/></svg>
<svg style="left:41px;top:261px" width="5" height="5"><path d="M4.5,0.5V4.5H0.5Z" fill="#8a8a8a"/></svg>
<svg style="left:16px;top:273px" width="24" height="24"><circle cx="12" cy="12" r="9.5" fill="none" stroke="#e0e0e0" stroke-width="1.1"/><rect x="8" y="8" width="8" height="8" rx="1" fill="#e0e0e0"/><path d="M12,0.5L14.5,4H9.5Z M12,23.5L14.5,20H9.5Z M0.5,12L4,9.5V14.5Z M23.5,12L20,9.5V14.5Z" fill="#e0e0e0" stroke="#252525" stroke-width="0.8"/></svg>
<svg style="left:15px;top:313px" width="26" height="26"><path d="M1.5,19 C6,23 9,21 12,17.5 S19,13 25,18.5" fill="none" stroke="#7fd4a9" stroke-width="1.3"/><path d="M3,16 L5.2,11.5 L15.5,2.5 L18.8,6 L8,15 Z" fill="#e6e6e6"/><path d="M14,3.8 L17.3,7.4" stroke="#252525" stroke-width="1"/></svg>
<svg style="left:41px;top:337px" width="5" height="5"><path d="M4.5,0.5V4.5H0.5Z" fill="#8a8a8a"/></svg>
<svg style="left:17px;top:347px" width="24" height="27"><path d="M5,24 V10 C12,10 19,16 19,24 Z" fill="#7fd4a9"/><path d="M2.2,1V25M0.8,25.2H21.5" stroke="#e6e6e6" stroke-width="2.6"/><path d="M2.2,3.5H6M2.2,7.5H5M2.2,11.5H6M2.2,15.5H5M2.2,19.5H6M6,25V22M10,25V23M14,25V22M18,25V23" stroke="#e6e6e6" stroke-width="1"/></svg>
<svg style="left:14px;top:386px" width="28" height="30"><path d="M0.5,5.5H8.5M4.5,1.5V9.5" stroke="#59d98a" stroke-width="1.8"/><g fill="none" stroke="#8ed9b0" stroke-width="1.2" stroke-linejoin="round"><path d="M7,14 L11,9.5 H25 V23 L21,27.5 H7 Z"/><path d="M7,14H21V27.5M21,14L25,9.5"/></g></svg>
<svg style="left:41px;top:412px" width="5" height="5"><path d="M4.5,0.5V4.5H0.5Z" fill="#8a8a8a"/></svg>
<span class="t sh" style="left:65px;top:89px">Perspective Utilisateur</span>
<span class="t sh" style="left:65px;top:107px">(287) Collection | chapelle_roume_decoupe</span>
<span class="t sh" style="left:65px;top:135px">Objets</span>
<span class="t sh" style="left:143px;top:135px">4</span>
<span class="t sh" style="left:65px;top:152px">Sommets</span>
<span class="t sh" style="left:143px;top:152px">1,797,335</span>
<span class="t sh" style="left:65px;top:169px">Arêtes</span>
<span class="t sh" style="left:143px;top:169px">4,452,873</span>
<span class="t sh" style="left:65px;top:186px">Faces</span>
<span class="t sh" style="left:143px;top:186px">2,691,904</span>
<span class="t sh" style="left:65px;top:203px">Triangles</span>
<span class="t sh" style="left:143px;top:203px">2,691,904</span>
<svg style="left:0;top:0" width="1902" height="300"><path d="M1523,130 L1509,119" stroke="#e8365a" stroke-width="2"/><circle cx="1509" cy="119.2" r="7.6" fill="#9b3347"/><circle cx="1551.7" cy="124.6" r="7" fill="#4d5e2b" stroke="#76ad1c" stroke-width="1.3"/><circle cx="1523" cy="160" r="7" fill="#36496b" stroke="#2f7ad9" stroke-width="1.3"/><path d="M1523,130 L1494.3,135" stroke="#7ab317" stroke-width="2"/><path d="M1523,130 L1522.7,100.3" stroke="#2f83e3" stroke-width="2"/><circle cx="1536.9" cy="141" r="7.6" fill="#7c3b49" stroke="#ec3a5f" stroke-width="1.4"/><circle cx="1494.3" cy="135" r="8.2" fill="#7ab317"/><circle cx="1522.7" cy="100.3" r="8.2" fill="#2f83e3"/><g font-family="Liberation Sans, sans-serif" font-size="11" fill="#111" text-anchor="middle"><text x="1509" y="123.2">X</text><text x="1494.3" y="139">Y</text><text x="1522.7" y="104.3">Z</text></g></svg>
<div class="a" style="left:1537.3px;top:171.2px;width:27px;height:27px;border-radius:50%;background:#2b2b2b"></div>
<div class="a" style="left:1537.3px;top:201.2px;width:27px;height:27px;border-radius:50%;background:#2b2b2b"></div>
<div class="a" style="left:1537.3px;top:231.4px;width:27px;height:27px;border-radius:50%;background:#2b2b2b"></div>
<div class="a" style="left:1537.3px;top:261.4px;width:27px;height:27px;border-radius:50%;background:#2b2b2b"></div>
<svg style="left:1543px;top:176px" width="18" height="18"><circle cx="6.8" cy="6.8" r="5.5" fill="none" stroke="#e6e6e6" stroke-width="1.7"/><path d="M11,11L16,16" stroke="#e6e6e6" stroke-width="2.2" stroke-linecap="round"/><path d="M4.3,6.8H9.3M6.8,4.3V9.3" stroke="#e6e6e6" stroke-width="1.2"/></svg>
<svg style="left:1542px;top:206px" width="18" height="18"><path d="M4,9.5 V4.2 a1.1,1.1 0 0 1 2.2,0 V8 V2.6 a1.1,1.1 0 0 1 2.2,0 V8 V2.2 a1.1,1.1 0 0 1 2.2,0 V8.2 V3.6 a1.1,1.1 0 0 1 2.2,0 V11 C12.8,15 11,16.5 8.5,16.5 C6,16.5 4.8,15.5 3.5,13.2 L1,9.6 c-0.5,-1 0.8,-1.8 1.6,-1 Z" fill="#e6e6e6"/></svg>
<svg style="left:1542px;top:236px" width="19" height="18"><g fill="none" stroke="#e6e6e6" stroke-width="1.2"><path d="M1,5.5 C1,2.5 3,1 5.5,1 H10.5 C13.5,1 15.5,2.5 15.5,5 C15.5,7.5 13.8,8.8 11.5,8.8 H5 C2.5,8.8 1,7.5 1,5.5Z"/><circle cx="11.5" cy="4.8" r="1.5"/><path d="M3.5,4.8H7M5.2,3.2V6.4" stroke-width="1"/><rect x="5" y="10.5" width="7" height="5.5"/><path d="M12.5,13.2 L16.5,10.8V16Z M1.5,12H5"/></g></svg>
<svg style="left:1542px;top:266px" width="18" height="18"><path d="M4,1.5H14L17,15.5H1ZM7.3,1.5L6,15.5M10.7,1.5L12,15.5M3.2,5.8H14.8M2.2,10.2H15.8" fill="none" stroke="#e6e6e6" stroke-width="1.3"/></svg>
<div class="a" style="left:1564px;top:102px;width:10px;height:18px;background:#363636;border-radius:4px 0 0 4px;"></div>
<svg style="left:1566px;top:106px" width="6" height="10"><path d="M4.5,1L1,5L4.5,9" fill="none" stroke="#bbb" stroke-width="1.2"/></svg>
<div class="a" style="left:1px;top:28px;width:1571px;height:1005px;border:1px solid rgba(255,255,255,0.13);border-radius:6px;pointer-events:none"></div>
<div class="a" style="left:1578px;top:28px;width:330px;height:185px;background:#282828;border-radius:6px 0 0 6px;overflow:hidden">
<div class="a" style="left:0;top:0;width:330px;height:1px;background:#3a3a3a"></div>
<div class="a" style="left:0;top:48px;width:330px;height:20px;background:#2b2b2b"></div>
<div class="a" style="left:0;top:88px;width:330px;height:20px;background:#2b2b2b"></div>
<div class="a" style="left:0;top:128px;width:330px;height:20px;background:#2b2b2b"></div>
<div class="a" style="left:0;top:168px;width:330px;height:20px;background:#2b2b2b"></div>
<div class="a" style="left:0;top:0;width:340px;height:183px;border:1px solid #3a3a3a;border-radius:6px 0 0 6px"></div>
</div>
<div class="hb" style="left:1587px;width:31px"></div>
<svg style="left:1592px;top:34px" width="14" height="13"><path d="M0,0H4V3H0Z M4,4.5H13.5V7.5H4Z M7,9.5H13.5V12.5H7Z" fill="#e6e6e6"/><path d="M2,3V6H4M2,6V11H7" fill="none" stroke="#e6e6e6" stroke-width="1"/></svg>
<svg style="left:1608.0px;top:38.25px" width="8" height="5.5"><path d="M1,1 L4.0,4.5 L7,1" fill="none" stroke="#e6e6e6" stroke-width="1.3" stroke-linecap="round" stroke-linejoin="round"/></svg>
<div class="hb" style="left:1624px;width:31px"></div>
<svg style="left:1628px;top:33px" width="15" height="15"><path d="M0.6,5V14.4H10M2.8,3V12.2H12" fill="none" stroke="#e6e6e6" stroke-width="1"/><rect x="5" y="0.6" width="9.4" height="9.4" fill="none" stroke="#e6e6e6" stroke-width="1.1"/><path d="M5.5,9.5 L8.5,5.5 L10.5,8 L12,6.5 L14,9.5Z" fill="#e6e6e6"/><circle cx="11.5" cy="3.5" r="1" fill="#e6e6e6"/></svg>
<svg style="left:1645.0px;top:38.25px" width="8" height="5.5"><path d="M1,1 L4.0,4.5 L7,1" fill="none" stroke="#e6e6e6" stroke-width="1.3" stroke-linecap="round" stroke-linejoin="round"/></svg>
<div class="hb" style="left:1677px;width:118px;background:#1d1d1d"></div>
<svg style="left:1680px;top:33px" width="16" height="16"><circle cx="6.2" cy="6.2" r="4.8" fill="none" stroke="#e6e6e6" stroke-width="1.4"/><path d="M9.8,9.8L14.5,14.5" stroke="#e6e6e6" stroke-width="1.6" stroke-linecap="round"/></svg>
<span class="t" style="left:1702px;top:33px;color:#6e6e6e;letter-spacing:-0.3px">Rechercher</span>
<div class="hb" style="left:1852px;width:31px"></div>
<svg style="left:1856px;top:34px" width="14" height="14"><path d="M0.8,0.8H12.8L8.3,6.5V12.6L5.3,10.5V6.5Z" fill="none" stroke="#e6e6e6" stroke-width="1.2" stroke-linejoin="round"/></svg>
<svg style="left:1872.0px;top:38.25px" width="8" height="5.5"><path d="M1,1 L4.0,4.5 L7,1" fill="none" stroke="#e6e6e6" stroke-width="1.3" stroke-linecap="round" stroke-linejoin="round"/></svg>
<div class="hb" style="left:1890px;width:20px;background:#464646"></div>
<svg style="left:1893px;top:33px" width="12" height="15"><path d="M0.6,3.5V0.6H9M0.6,5.5H9M1.5,5.5V13.5H9M4,9H8" fill="none" stroke="#e6e6e6" stroke-width="1.1"/></svg>
<svg style="left:1600px;top:59px" width="14" height="14"><path d="M0.5,0.5H13.5V3.5H0.5Z" fill="#e6e6e6"/><path d="M1.5,4.5H12.5V13.5H1.5Z M5,7H9V9.2H5Z" fill="#e6e6e6" fill-rule="evenodd"/></svg>
<span class="t" style="left:1622px;top:59px">Collection de la scène</span>
<svg style="left:1603.5px;top:83.0px" width="9" height="6"><path d="M1,1 L4.5,5 L8,1" fill="none" stroke="#d0d0d0" stroke-width="1.2" stroke-linecap="round" stroke-linejoin="round"/></svg>
<div class="a" style="left:1618px;top:77px;width:20px;height:17px;background:#4c4c4c;border-radius:4px;box-shadow:0 0 0 1px #6a6a6a inset"></div>
<svg style="left:1621px;top:79px" width="14" height="14"><path d="M0.5,0.5H13.5V3.5H0.5Z" fill="#e6e6e6"/><path d="M1.5,4.5H12.5V13.5H1.5Z M5,7H9V9.2H5Z" fill="#e6e6e6" fill-rule="evenodd"/></svg>
<span class="t" style="left:1642px;top:79px;color:#fff">Collection</span>
<div class="a" style="left:1851px;top:80px;width:11px;height:11px;background:#e6e6e6;border-radius:2px;"></div>
<svg style="left:1851px;top:80px" width="11" height="11"><path d="M2.2,5.6L4.6,8L9,2.8" fill="none" stroke="#222" stroke-width="1.6"/></svg>
<svg style="left:1869.5px;top:79.5px" width="14" height="10"><path d="M0.3,5 C3,-0.8 11,-0.8 13.7,5 C11,10.8 3,10.8 0.3,5Z" fill="#e6e6e6"/><circle cx="7" cy="5" r="3.1" fill="#282828"/><circle cx="7" cy="5" r="1.6" fill="#e6e6e6"/></svg>
<svg style="left:1889px;top:80px" width="14" height="12"><path d="M0.5,2.5H3.5L4.5,0.6H9.5L10.5,2.5H13.5V11.4H0.5Z" fill="#e6e6e6"/><circle cx="7" cy="6.8" r="3.3" fill="#282828"/><circle cx="7" cy="6.8" r="1.9" fill="none" stroke="#e6e6e6" stroke-width="1.1"/></svg>
<div class="a" style="left:1607px;top:100px;width:1px;height:113px;background:#4a4a4a"></div>
<svg style="left:1625.5px;top:101.0px" width="6" height="10"><path d="M1,1 L5,5.0 L1,9" fill="none" stroke="#8a8a8a" stroke-width="1.2" stroke-linecap="round" stroke-linejoin="round"/></svg>
<svg style="left:1640px;top:98px" width="16" height="16"><g fill="#a0663c"><circle cx="4" cy="4" r="3.3"/><circle cx="10.5" cy="3.6" r="3"/><rect x="1.5" y="7.5" width="10.5" height="7.5" rx="1"/><path d="M12.5,11L15.5,8.8V14.5L12.5,12.4Z"/></g><circle cx="4" cy="4" r="1.1" fill="#282828"/><circle cx="10.5" cy="3.6" r="1" fill="#282828"/><path d="M0,9.2H3" stroke="#a0663c" stroke-width="1.4"/></svg>
<span class="t" style="left:1662px;top:99px;color:#8e8e8e;letter-spacing:-0.35px">Camera</span>
<svg style="left:1724px;top:98px" width="16" height="16"><path d="M3,8 C3,5 5.5,4.2 7.5,3 L12,0.8 C14,0 15.5,1.6 14.6,3.6 L11.5,10.5 C10.5,13 8.5,14.5 6,14.5 C3,14.5 1,12 1,9.8 C1,9 1.6,7.5 3,8Z" fill="none" stroke="#4d68a8" stroke-width="1.2"/><circle cx="6.3" cy="9.3" r="2.6" fill="none" stroke="#4d68a8" stroke-width="1.3"/><circle cx="6.3" cy="9.3" r="0.8" fill="#4d68a8"/><circle cx="12" cy="3.6" r="0.8" fill="#4d68a8"/></svg>
<div class="a" style="left:1742px;top:97px;width:20px;height:18px;background:#4c4c4c;border-radius:4px;box-shadow:0 0 0 1px #636363 inset"></div>
<svg style="left:1744px;top:98px" width="16" height="16"><g fill="none" stroke="#2a9c80" stroke-width="1.1"><path d="M1,5C1,2.5 2.6,1.2 4.6,1.2H9C12,1.2 13.5,2.8 13.5,4.8C13.5,7 12,8 10,8H4.5C2.4,8 1,6.8 1,5Z"/><circle cx="10" cy="4.5" r="1.3"/><path d="M3,4.5H6M4.5,3V6"/><rect x="4.5" y="9.8" width="6" height="4.8"/><path d="M11,12.2L14.5,10V14.6Z M1.5,11H4.5"/></g></svg>
<svg style="left:1869.5px;top:104px" width="14" height="6"><path d="M0.8,0.8 C3.5,6 10.5,6 13.2,0.8" fill="none" stroke="#c8c8c8" stroke-width="1.1"/></svg>
<svg style="left:1889px;top:100px" width="14" height="12"><path d="M0.5,2.5H3.5L4.5,0.6H9.5L10.5,2.5H13.5V11.4H0.5Z" fill="#e6e6e6"/><circle cx="7" cy="6.8" r="3.3" fill="#282828"/><circle cx="7" cy="6.8" r="1.9" fill="none" stroke="#e6e6e6" stroke-width="1.1"/></svg>
<svg style="left:1625.5px;top:121.0px" width="6" height="10"><path d="M1,1 L5,5.0 L1,9" fill="none" stroke="#8a8a8a" stroke-width="1.2" stroke-linecap="round" stroke-linejoin="round"/></svg>
<svg style="left:1641px;top:118px" width="16" height="16"><path d="M5,2 C12,0.5 14.5,5 12.5,9 C10.5,13 6,14 1.5,13" fill="none" stroke="#9a6038" stroke-width="2.6" stroke-linecap="round"/></svg>
<span class="t" style="left:1662px;top:119px;color:#8e8e8e;letter-spacing:-0.29px">CercleBézier</span>
<svg style="left:1749px;top:118px" width="16" height="16"><g fill="none" stroke="#1f9c7e" stroke-width="1.1"><path d="M8,2.5C13,2.5 15,6 13.5,9.5C12.3,12 9.5,13 5,13"/><rect x="5" y="1" width="3" height="3" rx="0.8"/><rect x="1" y="11.5" width="3" height="3" rx="0.8"/></g></svg>
<svg style="left:1869.5px;top:124px" width="14" height="6"><path d="M0.8,0.8 C3.5,6 10.5,6 13.2,0.8" fill="none" stroke="#c8c8c8" stroke-width="1.1"/></svg>
<svg style="left:1889px;top:120px" width="14" height="12"><path d="M0.5,2.5H3.5L4.5,0.6H9.5L10.5,2.5H13.5V11.4H0.5Z" fill="#e6e6e6"/><circle cx="7" cy="6.8" r="3.3" fill="#282828"/><circle cx="7" cy="6.8" r="1.9" fill="none" stroke="#e6e6e6" stroke-width="1.1"/></svg>
<svg style="left:1625.5px;top:141.0px" width="6" height="10"><path d="M1,1 L5,5.0 L1,9" fill="none" stroke="#d0d0d0" stroke-width="1.2" stroke-linecap="round" stroke-linejoin="round"/></svg>
<div class="a" style="left:1638px;top:137px;width:20px;height:18px;background:#4c4c4c;border-radius:4px;box-shadow:0 0 0 1px #636363 inset"></div>
<svg style="left:1641px;top:139px" width="14" height="14"><path d="M0.5,0.8H13.5L7,13.2Z M4,3L7,8.8L10,3Z" fill="#e08f4a" fill-rule="evenodd"/></svg>
<span class="t" style="left:1662px;top:139px;letter-spacing:-0.16px">chapelle_roume_decoupe</span>
<svg style="left:1819px;top:138px" width="15" height="15"><g fill="none" stroke="#1fc59c" stroke-width="1.1"><path d="M2.5,2.5H12.5L7.5,12.5Z"/><rect x="0.8" y="0.8" width="3" height="3" fill="#282828"/><rect x="11.2" y="0.8" width="3" height="3" fill="#282828"/><rect x="6" y="11" width="3" height="3" fill="#282828"/></g></svg>
<svg style="left:1869.5px;top:139.5px" width="14" height="10"><path d="M0.3,5 C3,-0.8 11,-0.8 13.7,5 C11,10.8 3,10.8 0.3,5Z" fill="#e6e6e6"/><circle cx="7" cy="5" r="3.1" fill="#282828"/><circle cx="7" cy="5" r="1.6" fill="#e6e6e6"/></svg>
<svg style="left:1889px;top:140px" width="14" height="12"><path d="M0.5,2.5H3.5L4.5,0.6H9.5L10.5,2.5H13.5V11.4H0.5Z" fill="#e6e6e6"/><circle cx="7" cy="6.8" r="3.3" fill="#282828"/><circle cx="7" cy="6.8" r="1.9" fill="none" stroke="#e6e6e6" stroke-width="1.1"/></svg>
<svg style="left:1625.5px;top:161.0px" width="6" height="10"><path d="M1,1 L5,5.0 L1,9" fill="none" stroke="#d0d0d0" stroke-width="1.2" stroke-linecap="round" stroke-linejoin="round"/></svg>
<svg style="left:1641px;top:157px" width="14" height="17"><path d="M7,0.3 C10.8,0.3 13.2,2.8 13.2,6 C13.2,8.6 11.5,9.8 10.6,11.6 H3.4 C2.5,9.8 0.8,8.6 0.8,6 C0.8,2.8 3.2,0.3 7,0.3Z" fill="#d88a4b"/><path d="M3.6,12.6H10.4V14H3.6Z M5,15H9V16.2H5Z" fill="#d88a4b"/><path d="M4,6.2H10M5,6.2V9.5M9,6.2V9.5M5,8H9" stroke="#282828" stroke-width="1" fill="none"/></svg>
<span class="t" style="left:1662px;top:159px">Light</span>
<svg style="left:1712.5px;top:158px" width="14" height="17"><circle cx="7" cy="6.8" r="6.2" fill="none" stroke="#1fbf98" stroke-width="1.2"/><circle cx="7" cy="7" r="1" fill="none" stroke="#1fbf98" stroke-width="1"/><path d="M7,8V16" stroke="#1fbf98" stroke-width="1.1" stroke-dasharray="3 1.2"/></svg>
<svg style="left:1869.5px;top:159.5px" width="14" height="10"><path d="M0.3,5 C3,-0.8 11,-0.8 13.7,5 C11,10.8 3,10.8 0.3,5Z" fill="#e6e6e6"/><circle cx="7" cy="5" r="3.1" fill="#282828"/><circle cx="7" cy="5" r="1.6" fill="#e6e6e6"/></svg>
<svg style="left:1889px;top:160px" width="14" height="12"><path d="M0.5,2.5H3.5L4.5,0.6H9.5L10.5,2.5H13.5V11.4H0.5Z" fill="#e6e6e6"/><circle cx="7" cy="6.8" r="3.3" fill="#282828"/><circle cx="7" cy="6.8" r="1.9" fill="none" stroke="#e6e6e6" stroke-width="1.1"/></svg>
<svg style="left:1625.5px;top:181.0px" width="6" height="10"><path d="M1,1 L5,5.0 L1,9" fill="none" stroke="#d0d0d0" stroke-width="1.2" stroke-linecap="round" stroke-linejoin="round"/></svg>
<svg style="left:1641px;top:177px" width="14" height="17"><path d="M7,0.3 C10.8,0.3 13.2,2.8 13.2,6 C13.2,8.6 11.5,9.8 10.6,11.6 H3.4 C2.5,9.8 0.8,8.6 0.8,6 C0.8,2.8 3.2,0.3 7,0.3Z" fill="#d88a4b"/><path d="M3.6,12.6H10.4V14H3.6Z M5,15H9V16.2H5Z" fill="#d88a4b"/><path d="M4,6.2H10M5,6.2V9.5M9,6.2V9.5M5,8H9" stroke="#282828" stroke-width="1" fill="none"/></svg>
<span class="t" style="left:1662px;top:179px">Point</span>
<svg style="left:1713.5px;top:178px" width="14" height="17"><circle cx="7" cy="6.8" r="6.2" fill="none" stroke="#1fbf98" stroke-width="1.2"/><circle cx="7" cy="7" r="1" fill="none" stroke="#1fbf98" stroke-width="1"/><path d="M7,8V16" stroke="#1fbf98" stroke-width="1.1" stroke-dasharray="3 1.2"/></svg>
<svg style="left:1869.5px;top:179.5px" width="14" height="10"><path d="M0.3,5 C3,-0.8 11,-0.8 13.7,5 C11,10.8 3,10.8 0.3,5Z" fill="#e6e6e6"/><circle cx="7" cy="5" r="3.1" fill="#282828"/><circle cx="7" cy="5" r="1.6" fill="#e6e6e6"/></svg>
<svg style="left:1889px;top:180px" width="14" height="12"><path d="M0.5,2.5H3.5L4.5,0.6H9.5L10.5,2.5H13.5V11.4H0.5Z" fill="#e6e6e6"/><circle cx="7" cy="6.8" r="3.3" fill="#282828"/><circle cx="7" cy="6.8" r="1.9" fill="none" stroke="#e6e6e6" stroke-width="1.1"/></svg>
<svg style="left:1625.5px;top:201.0px" width="6" height="10"><path d="M1,1 L5,5.0 L1,9" fill="none" stroke="#d0d0d0" stroke-width="1.2" stroke-linecap="round" stroke-linejoin="round"/></svg>
<svg style="left:1641px;top:197px" width="14" height="17"><path d="M7,0.3 C10.8,0.3 13.2,2.8 13.2,6 C13.2,8.6 11.5,9.8 10.6,11.6 H3.4 C2.5,9.8 0.8,8.6 0.8,6 C0.8,2.8 3.2,0.3 7,0.3Z" fill="#d88a4b"/><path d="M3.6,12.6H10.4V14H3.6Z M5,15H9V16.2H5Z" fill="#d88a4b"/><path d="M4,6.2H10M5,6.2V9.5M9,6.2V9.5M5,8H9" stroke="#282828" stroke-width="1" fill="none"/></svg>
<span class="t" style="left:1662px;top:199px">Point.001</span>
<svg style="left:1737.5px;top:198px" width="14" height="17"><circle cx="7" cy="6.8" r="6.2" fill="none" stroke="#1fbf98" stroke-width="1.2"/><circle cx="7" cy="7" r="1" fill="none" stroke="#1fbf98" stroke-width="1"/><path d="M7,8V16" stroke="#1fbf98" stroke-width="1.1" stroke-dasharray="3 1.2"/></svg>
<svg style="left:1869.5px;top:199.5px" width="14" height="10"><path d="M0.3,5 C3,-0.8 11,-0.8 13.7,5 C11,10.8 3,10.8 0.3,5Z" fill="#e6e6e6"/><circle cx="7" cy="5" r="3.1" fill="#282828"/><circle cx="7" cy="5" r="1.6" fill="#e6e6e6"/></svg>
<svg style="left:1889px;top:200px" width="14" height="12"><path d="M0.5,2.5H3.5L4.5,0.6H9.5L10.5,2.5H13.5V11.4H0.5Z" fill="#e6e6e6"/><circle cx="7" cy="6.8" r="3.3" fill="#282828"/><circle cx="7" cy="6.8" r="1.9" fill="none" stroke="#e6e6e6" stroke-width="1.1"/></svg>
<div class="a" style="left:1576px;top:213px;width:326px;height:3px;background:#181818"></div>
<div class="a" style="left:1578px;top:216px;width:330px;height:819px;background:#303030;border-radius:6px 0 0 6px;overflow:hidden">
<div class="a" style="left:0;top:26px;width:28px;height:800px;background:#181818"></div>
<div class="a" style="left:4px;top:34px;width:24px;height:28px;background:#1d1d1d;border-radius:4px 0 0 4px"></div>
<div class="a" style="left:4px;top:70px;width:24px;height:140px;background:#1d1d1d;border-radius:4px 0 0 4px"></div>
<div class="a" style="left:4px;top:218px;width:24px;height:28px;background:#1d1d1d;border-radius:4px 0 0 4px"></div>
<div class="a" style="left:4px;top:254px;width:24px;height:196px;background:#1d1d1d;border-radius:4px 0 0 4px"></div>
<div class="a" style="left:4px;top:458px;width:24px;height:28px;background:#1d1d1d;border-radius:4px 0 0 4px"></div>
<div class="a" style="left:0;top:0;width:340px;height:817px;border:1px solid #3d3d3d;border-radius:6px 0 0 6px"></div>
<div class="a" style="left:4px;top:34px;width:24px;height:28px;background:#303030;border-radius:4px 0 0 4px"></div>
</div>
<div class="hb" style="left:1587px;top:219px;width:31px"></div>
<svg style="left:1591px;top:221px" width="15" height="14"><rect x="0.6" y="0.6" width="12.8" height="5.6" rx="2.8" fill="none" stroke="#e6e6e6" stroke-width="1.1"/><rect x="0.6" y="7.8" width="12.8" height="5.6" rx="2.8" fill="#e6e6e6"/><circle cx="3.4" cy="3.4" r="2.8" fill="#e6e6e6"/><rect x="7" y="8.6" width="5.6" height="4" rx="2" fill="#282828"/></svg>
<svg style="left:1608.0px;top:226.25px" width="8" height="5.5"><path d="M1,1 L4.0,4.5 L7,1" fill="none" stroke="#e6e6e6" stroke-width="1.3" stroke-linecap="round" stroke-linejoin="round"/></svg>
<div class="hb" style="left:1689px;top:219px;width:118px;background:#1d1d1d"></div>
<svg style="left:1692px;top:221px" width="16" height="16"><circle cx="6.2" cy="6.2" r="4.8" fill="none" stroke="#e6e6e6" stroke-width="1.4"/><path d="M9.8,9.8L14.5,14.5" stroke="#e6e6e6" stroke-width="1.6" stroke-linecap="round"/></svg>
<span class="t" style="left:1714px;top:221px;color:#6e6e6e;letter-spacing:-0.3px">Rechercher</span>
<div class="hb" style="left:1889px;top:219px;width:20px"></div>
<svg style="left:1893.0px;top:226.25px" width="8" height="5.5"><path d="M1,1 L4.0,4.5 L7,1" fill="none" stroke="#e6e6e6" stroke-width="1.3" stroke-linecap="round" stroke-linejoin="round"/></svg>
<svg style="left:1621px;top:249px" width="23" height="23"><rect x="0.8" y="0.8" width="20.6" height="20.6" fill="none" stroke="#f5b63d" stroke-width="1.3" stroke-dasharray="4 2.2"/><path d="M7.5,5 L7.5,16.5 L10.6,13.2 L15.5,12.8 Z" fill="#e8e8e8"/></svg>
<span class="t" style="left:1652px;top:253px">Sélection par rectangle</span>
<div class="a" style="left:1615px;top:281px;width:94px;height:18px;background:#545454;border-radius:4px;"></div><div class="a" style="left:1615px;top:281px;width:18px;height:18px;background:#4772b3;border-radius:4px 0 0 4px;"></div><div class="a" style="left:1633px;top:281px;width:1px;height:18px;background:#3a3a3a;border-radius:0;"></div><div class="a" style="left:1652px;top:281px;width:1px;height:18px;background:#3a3a3a;border-radius:0;"></div><div class="a" style="left:1671px;top:281px;width:1px;height:18px;background:#3a3a3a;border-radius:0;"></div><div class="a" style="left:1690px;top:281px;width:1px;height:18px;background:#3a3a3a;border-radius:0;"></div><svg style="left:1617px;top:283px" width="14" height="14"><rect x="0.7" y="0.7" width="12.6" height="12.6" fill="none" stroke="#fff" stroke-width="1.3" stroke-dasharray="2.2 1.4"/></svg><svg style="left:1636px;top:283px" width="14" height="14"><path d="M5,0H14V9H9V14H0V5H5Z" fill="#d4d4d4"/></svg><svg style="left:1655px;top:283px" width="14" height="14"><path d="M5,0H14V9H9V5H5Z" fill="#d4d4d4"/><rect x="0.6" y="5.6" width="8" height="8" fill="none" stroke="#d4d4d4" stroke-width="1.1" stroke-dasharray="1.6 1.2"/></svg><svg style="left:1674px;top:283px" width="14" height="14"><path d="M5,0H14V9H9V14H0V5H5Z" fill="#d4d4d4"/><rect x="5" y="5" width="4" height="4" fill="#545454"/></svg><svg style="left:1693px;top:283px" width="14" height="14"><rect x="0.6" y="0.6" width="12.8" height="12.8" fill="none" stroke="#d4d4d4" stroke-width="1.1" stroke-dasharray="1.8 1.3"/><rect x="4" y="4" width="6" height="6" fill="#d4d4d4"/></svg>
<div class="a" style="left:1614px;top:310px;width:300px;height:126px;background:#353535;border-radius:4px;"></div>
<div class="a" style="left:1614px;top:310px;width:300px;height:50px;background:#3d3d3d;border-radius:4px 0 0 0;"></div>
<svg style="left:1622.5px;top:320.0px" width="9" height="6"><path d="M1,1 L4.5,5 L8,1" fill="none" stroke="#d0d0d0" stroke-width="1.2" stroke-linecap="round" stroke-linejoin="round"/></svg>
<span class="t" style="left:1636px;top:316px">Options</span>
<svg style="left:1636.5px;top:345.0px" width="9" height="6"><path d="M1,1 L4.5,5 L8,1" fill="none" stroke="#d0d0d0" stroke-width="1.2" stroke-linecap="round" stroke-linejoin="round"/></svg>
<span class="t" style="left:1650px;top:341px">Transformation</span>
<span class="t" style="left:1629px;top:371px">Affecter seulement</span>
<div class="a" style="left:1739px;top:372px;width:12px;height:12px;background:#545454;border-radius:3px;"></div>
<span class="t" style="left:1755px;top:371px">Origines</span>
<div class="a" style="left:1739px;top:392px;width:12px;height:12px;background:#545454;border-radius:3px;"></div>
<span class="t" style="left:1755px;top:391px">Positions</span>
<div class="a" style="left:1739px;top:412px;width:12px;height:12px;background:#545454;border-radius:3px;"></div>
<span class="t" style="left:1755px;top:411px">Parents</span>
<svg style="left:1888px;top:321px" width="10" height="4"><g fill="#6e6e6e"><rect x="0" y="0" width="1.2" height="1.2"/><rect x="3" y="0" width="1.2" height="1.2"/><rect x="6" y="0" width="1.2" height="1.2"/><rect x="9" y="0" width="1.2" height="1.2"/><rect x="0" y="3" width="1.2" height="1.2"/><rect x="3" y="3" width="1.2" height="1.2"/><rect x="6" y="3" width="1.2" height="1.2"/><rect x="9" y="3" width="1.2" height="1.2"/></g></svg>
<div class="a" style="left:1614px;top:439px;width:300px;height:24px;background:#3d3d3d;border-radius:4px;"></div>
<svg style="left:1624.5px;top:446.0px" width="6" height="10"><path d="M1,1 L5,5.0 L1,9" fill="none" stroke="#d0d0d0" stroke-width="1.2" stroke-linecap="round" stroke-linejoin="round"/></svg>
<span class="t" style="left:1636px;top:444px">Espace de travail</span>
<svg style="left:1888px;top:449px" width="10" height="4"><g fill="#6e6e6e"><rect x="0" y="0" width="1.2" height="1.2"/><rect x="3" y="0" width="1.2" height="1.2"/><rect x="6" y="0" width="1.2" height="1.2"/><rect x="9" y="0" width="1.2" height="1.2"/><rect x="0" y="3" width="1.2" height="1.2"/><rect x="3" y="3" width="1.2" height="1.2"/><rect x="6" y="3" width="1.2" height="1.2"/><rect x="9" y="3" width="1.2" height="1.2"/></g></svg>
<svg style="left:1585.0px;top:255.0px" width="16" height="16"><g fill="#d8d8d8"><rect x="2.6" y="0.5" width="1.2" height="8"/><ellipse cx="3.2" cy="12" rx="2.2" ry="3"/><path d="M9,0.5V4.5C9,6 10,6.8 10.8,7.2V15.5H12.6V7.2C13.4,6.8 14.4,6 14.4,4.5V0.5H13V4.2H10.4V0.5Z"/></g></svg>
<svg style="left:1585.0px;top:291.0px" width="16" height="16"><g fill="none" stroke="#d8d8d8" stroke-width="1.2"><rect x="1" y="4" width="11" height="9.5"/><path d="M4,4V1.5H9V4M3,7H7M3,10H7M9.5,7V10.5"/></g><path d="M13.5,5V7M13.5,8.5V10M13.5,11.5V13" stroke="#d8d8d8" stroke-width="1.6"/></svg>
<svg style="left:1585.0px;top:319.0px" width="16" height="16"><path d="M1,2.5H15V7H13.5V5.5H2.5V7H1Z" fill="#d8d8d8"/><path d="M3.5,7H12.5V14.5H3.5Z" fill="none" stroke="#d8d8d8" stroke-width="1.1"/><path d="M4.5,13.5L7,9.5L9,12L10,11L11.5,13.5Z" fill="#d8d8d8"/></svg>
<svg style="left:1585.0px;top:347.0px" width="16" height="16"><path d="M0.6,5V15.4H11M2.8,3V13.2H13" fill="none" stroke="#d8d8d8" stroke-width="1"/><rect x="5" y="0.6" width="10.4" height="10.4" fill="none" stroke="#d8d8d8" stroke-width="1.1"/><path d="M5.5,10.5L9,6L11,8.5L12.5,7L15,10.5Z" fill="#d8d8d8"/><circle cx="12.5" cy="3.5" r="1.1" fill="#d8d8d8"/></svg>
<svg style="left:1585.0px;top:375.0px" width="16" height="16"><path d="M4.5,1L8.5,10.5H0.5Z" fill="#d8d8d8"/><circle cx="13" cy="3.5" r="1.8" fill="#d8d8d8"/><circle cx="10.5" cy="11" r="3.8" fill="none" stroke="#d8d8d8" stroke-width="1.2"/><path d="M8.5,9.5A2.5,2.5 0 0 1 10.5,8.3" stroke="#d8d8d8" fill="none"/></svg>
<svg style="left:1585.0px;top:403.0px" width="16" height="16"><circle cx="8" cy="8" r="6.3" fill="none" stroke="#d9586a" stroke-width="1.3"/><path d="M3.5,5 C6,3 7,5 8.5,6.5 C9.5,8 7,9 7.5,11 C8,13 6,13.5 5,12 C4,10 2.5,8 3.5,5Z M10,3.5C12,4 13,6 12.5,8 C11.5,7 10,6 10,3.5Z" fill="#d9586a"/><path d="M1.5,13.5L14.5,2.5" stroke="#d9586a" stroke-width="1"/></svg>
<svg style="left:1585.0px;top:439.0px" width="16" height="16"><path d="M1.5,1.5H14.5V4.5H1.5Z M2.5,5.5H13.5V14.5H2.5Z M6,8H10" fill="none" stroke="#d8d8d8" stroke-width="1.2"/></svg>
<svg style="left:1585.0px;top:476.0px" width="16" height="16"><rect x="3.5" y="3.5" width="9" height="9" fill="#e08f4a"/><path d="M0.8,4V0.8H4M12,0.8H15.2V4M15.2,12V15.2H12M4,15.2H0.8V12" fill="none" stroke="#e08f4a" stroke-width="1.1"/></svg>
<svg style="left:1585.0px;top:504.0px" width="16" height="16"><path d="M14.5,4.2 C14.8,6.8 12.2,8.8 9.8,7.8 L3.6,14.4 C2.5,15.4 0.8,13.8 1.8,12.6 L8.3,6.3 C7.4,3.8 9.4,1.2 12,1.6 L10,3.8 L12.2,6 Z" fill="#5b8de0"/></svg>
<svg style="left:1585.0px;top:532.0px" width="16" height="16"><g stroke="#5b8de0" stroke-width="1.1" fill="#5b8de0"><circle cx="3.2" cy="3.5" r="2.3"/><circle cx="13.5" cy="3.5" r="1.1"/><circle cx="3.5" cy="13.5" r="1.1"/><circle cx="13" cy="13" r="1.5"/><path d="M3.2,3.5H13.5M3.2,3.5L3.5,13.5M3.2,3.5L13,13" fill="none"/></g></svg>
<svg style="left:1585.0px;top:560.0px" width="16" height="16"><path d="M11.5,13A6.2,6.2 0 1 1 11.5,3" fill="none" stroke="#5b8de0" stroke-width="1.3"/><circle cx="8" cy="8" r="2.8" fill="#5b8de0"/><circle cx="13.3" cy="3.2" r="1.7" fill="#5b8de0"/></svg>
<svg style="left:1585.0px;top:588.0px" width="16" height="16"><path d="M3,8 C3,5 5.5,4.2 7.5,3 L12,0.8 C14,0 15.5,1.6 14.6,3.6 L11.5,10.5 C10.5,13 8.5,14.5 6,14.5 C3,14.5 1,12 1,9.8 C1,9 1.6,7.5 3,8Z" fill="none" stroke="#6f8fdc" stroke-width="1.3"/><circle cx="6.3" cy="9.3" r="2.6" fill="none" stroke="#6f8fdc" stroke-width="1.4"/><circle cx="6.3" cy="9.3" r="0.9" fill="#6f8fdc"/><circle cx="12" cy="3.6" r="0.9" fill="#6f8fdc"/></svg>
<svg style="left:1585.0px;top:616.0px" width="16" height="16"><g fill="none" stroke="#1fc59c" stroke-width="1.2"><path d="M2.5,2.5H13.5L8,13.5Z"/><rect x="0.8" y="0.8" width="3.2" height="3.2" fill="#1f1f1f"/><rect x="12" y="0.8" width="3.2" height="3.2" fill="#1f1f1f"/><rect x="6.4" y="12" width="3.2" height="3.2" fill="#1f1f1f"/></g></svg>
<svg style="left:1585.0px;top:644.0px" width="16" height="16"><circle cx="8" cy="8" r="6.6" fill="#d9586a"/><path d="M8,8V1.4A6.6,6.6 0 0 1 14.6,8Z M8,8V14.6A6.6,6.6 0 0 1 1.4,8Z" fill="#1f1f1f"/><circle cx="8" cy="8" r="6.6" fill="none" stroke="#d9586a" stroke-width="1.2"/></svg>
<svg style="left:1585.0px;top:680.0px" width="16" height="16"><rect x="1.0" y="1.0" width="3.5" height="3.5" fill="#d9586a"/><rect x="1.0" y="4.5" width="3.5" height="3.5" fill="#3a1f24"/><rect x="1.0" y="8.0" width="3.5" height="3.5" fill="#d9586a"/><rect x="1.0" y="11.5" width="3.5" height="3.5" fill="#3a1f24"/><rect x="4.5" y="1.0" width="3.5" height="3.5" fill="#3a1f24"/><rect x="4.5" y="4.5" width="3.5" height="3.5" fill="#d9586a"/><rect x="4.5" y="8.0" width="3.5" height="3.5" fill="#3a1f24"/><rect x="4.5" y="11.5" width="3.5" height="3.5" fill="#d9586a"/><rect x="8.0" y="1.0" width="3.5" height="3.5" fill="#d9586a"/><rect x="8.0" y="4.5" width="3.5" height="3.5" fill="#3a1f24"/><rect x="8.0" y="8.0" width="3.5" height="3.5" fill="#d9586a"/><rect x="8.0" y="11.5" width="3.5" height="3.5" fill="#3a1f24"/><rect x="11.5" y="1.0" width="3.5" height="3.5" fill="#3a1f24"/><rect x="11.5" y="4.5" width="3.5" height="3.5" fill="#d9586a"/><rect x="11.5" y="8.0" width="3.5" height="3.5" fill="#3a1f24"/><rect x="11.5" y="11.5" width="3.5" height="3.5" fill="#d9586a"/></svg>
<svg style="left:1588.5px;top:716.0px" width="9" height="6"><path d="M1,1 L4.5,5 L8,1" fill="none" stroke="#5a5a5a" stroke-width="1.2" stroke-linecap="round" stroke-linejoin="round"/></svg>
<svg style="left:1851px;top:1040px" width="16" height="16"><g fill="none" stroke="#8e8e8e" stroke-width="1"><circle cx="8" cy="8" r="6.3"/><ellipse cx="8" cy="8" rx="2.8" ry="6.3"/><path d="M2,6H14M2,10.5H14"/><path d="M1.5,1.5L14.5,14.5" stroke-width="1.4"/></g></svg>
<div class="a" style="left:1872px;top:1040px;width:1px;height:15px;background:#8e8e8e"></div>
<span class="t" style="left:1877px;top:1041px;color:#a0a0a0">5.0.1</span>
</body>
</html>
